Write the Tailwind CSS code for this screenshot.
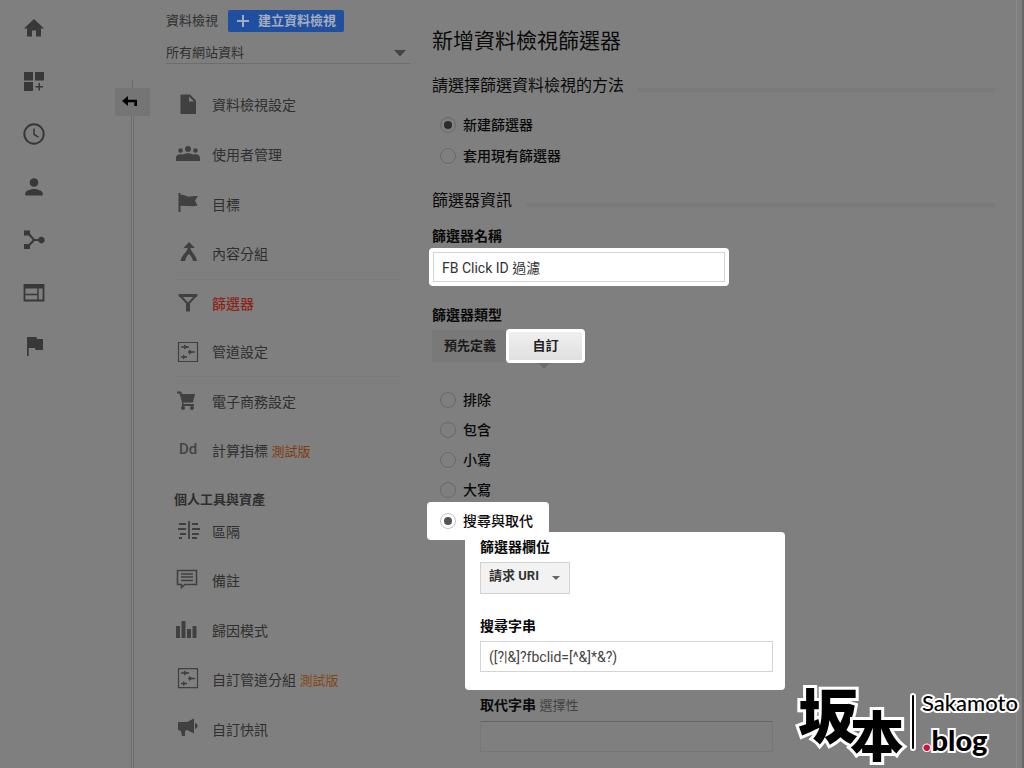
<!DOCTYPE html>
<html lang="zh-Hant">
<head>
<meta charset="utf-8">
<meta name="viewport" content="width=device-width, initial-scale=1">
<title>新增資料檢視篩選器</title>
<script src="https://cdn.jsdelivr.net/npm/@tailwindcss/browser@4"></script>
</head>
<body class="relative flex h-screen overflow-hidden bg-[#7f7f7f] font-[Roboto,'Noto_Sans_CJK_TC',sans-serif] text-sm text-[#0a0a0a]">

<nav aria-label="主選單" class="flex w-[68px] shrink-0 flex-col items-center gap-[29px] pt-4 text-[#383838]">
  <a href="#" aria-label="首頁"><svg class="size-6" viewBox="0 0 24 24" fill="currentColor"><path d="M10 20.500v-6h4v6h5v-8h3L12 3 2 12.500h3v8z"/></svg></a>
  <a href="#" aria-label="自訂"><svg class="size-6" viewBox="0 0 24 24" fill="currentColor"><path d="M2 3h9v8.500H2zM13 3h9v8.500h-9zM2 13h9v9H2zM16.500 14h1.500v3h3v1.500h-3v3h-1.500v-3h-3V17h3z"/></svg></a>
  <a href="#" aria-label="即時"><svg class="size-6" viewBox="0 0 24 24" fill="none" stroke="currentColor" stroke-width="2"><circle cx="12" cy="12" r="9.700"/><path d="M12 6.500v6l4.500 2.700" stroke-width="1.500"/></svg></a>
  <a href="#" aria-label="目標對象"><svg class="size-6" viewBox="0 0 24 24" fill="currentColor"><circle cx="12" cy="7.500" r="4.300"/><path d="M3.300 20.500v-2c0-3 5.800-4.500 8.700-4.500s8.700 1.500 8.700 4.500v2z"/></svg></a>
  <a href="#" aria-label="客戶開發"><svg class="size-6" viewBox="0 0 24 24" fill="currentColor"><path d="M2 2.500h6v3.200l4.600 5.300h3.700a3.300 3.300 0 1 1 0 2h-3.700L8 17.800V21H2v-5h4.700l4-4-4-4.500H2z"/></svg></a>
  <a href="#" aria-label="行為"><svg class="size-6" viewBox="0 0 24 24" fill="none" stroke="currentColor"><path d="M2.500 4h19v15.500h-19z" stroke-width="1.800"/><path d="M2 5.500h20" stroke-width="4"/><path d="M3 13.500h13M16 7v12" stroke-width="1.400"/></svg></a>
  <a href="#" aria-label="轉換"><svg class="size-6" viewBox="0 0 24 24" fill="currentColor"><path d="M5 3h9.500l.5 2h6v11h-7.500l-.5-2H6.700v8H5z"/></svg></a>
</nav>

<div class="flex w-[98px] shrink-0 flex-col items-center pt-20 pl-[30px]">
  <div class="h-2 w-px bg-[#6a6a6a]"></div>
  <button aria-label="返回" class="flex h-7 w-[35px] items-center justify-center bg-[#757575] pr-1 text-black"><svg class="size-4" viewBox="0 0 16 16" fill="currentColor"><path d="M0 7l6-5v3.700h9V12h-2.700V8.300H6V12z"/></svg></button>
  <div class="w-[3px] flex-1 border-x border-[#6d6d6d] bg-[#868686]"></div>
</div>

<aside class="flex w-[244px] shrink-0 flex-col text-[#2f2f2f]">
  <div class="flex items-center gap-2.5 pt-2.5 text-[13px] leading-[22px]">
    <span>資料檢視</span>
    <button class="flex h-[22px] items-center gap-2 rounded-xs bg-[#214f9f] px-2 font-bold text-[#a3acbd]">
      <svg class="size-3.5" viewBox="0 0 14 14" stroke="currentColor" stroke-width="2"><path d="M7 1v12M1 7h12"/></svg>建立資料檢視
    </button>
  </div>
  <button class="mt-2 flex h-[27px] items-center justify-between border-b border-[#6d6d6d] pt-1 text-[13px]">
    <span>所有網站資料</span>
    <svg class="mr-1 h-2 w-3 text-[#444]" viewBox="0 0 12 8" fill="currentColor"><path d="M0 1h12L6 7.500z"/></svg>
  </button>

  <ul class="mt-4 pr-2.5 pl-2.5">
    <li class="h-[50px]"><a href="#" class="flex h-full items-center gap-3"><svg class="size-6 text-[#404040]" viewBox="0 0 24 24" fill="currentColor"><path d="M4.500 1.500h9.500l6 6V21H4.500z"/><path d="M13 3.500v5h5z" fill="#7f7f7f"/></svg>資料檢視設定</a></li>
    <li class="h-[50px]"><a href="#" class="flex h-full items-center gap-3"><svg class="size-6 text-[#404040]" viewBox="0 0 24 24" fill="currentColor"><circle cx="12" cy="6" r="3"/><circle cx="4.500" cy="7.500" r="2.300"/><circle cx="19.500" cy="7.500" r="2.300"/><path d="M0 18v-3c0-4 5-4 7-3.300 2-2 8-2 10 0 2-.7 7-.7 7 3.300v3z"/></svg>使用者管理</a></li>
    <li class="h-[50px]"><a href="#" class="flex h-full items-center gap-3"><svg class="size-6 text-[#404040]" viewBox="0 0 24 24" fill="currentColor"><path d="M2.500 0h2v2c4-1 6 2.500 9.500 1.500 3-1 5-.5 8-.5l-3 4.500 2.500 5c-4 1.500-6 0-9 .5-3 .5-5-1-8 0v6h-2z"/></svg>目標</a></li>
    <li class="h-[49px]"><a href="#" class="flex h-full items-center gap-3"><svg class="size-6 text-[#404040]" viewBox="0 0 24 24" fill="currentColor"><path d="M13 0l6 6h-4.500c0 3 5 6 6.500 13h-4c-.5-3-2-5-4-7-2.500 2-3 4-4 7H4.500C6 12 11.500 10 11.500 6H7.500z"/></svg>內容分組</a></li>
    <li class="h-[49px] border-t border-[#797979]"><a href="#" aria-current="page" class="flex h-full items-center gap-3 font-medium text-[#8b2619]"><svg class="size-6 text-[#404040]" viewBox="0 0 24 24" fill="none" stroke="currentColor"><path d="M4 3.500h16L13 11v7.500h-2V11z" stroke-width="2"/><path d="M3 3.500h18" stroke-width="3"/></svg>篩選器</a></li>
    <li class="h-[49px] border-b border-[#797979]"><a href="#" class="flex h-full items-center gap-3"><svg class="size-6 text-[#404040]" viewBox="0 0 24 24" fill="none" stroke="currentColor" stroke-width="1.200"><path d="M2.500 2.500h19v19h-19z"/><path d="M5 7h8M12 12h7M5 17h6" stroke-width="1.500"/><path d="M8 4.500l4 2.500-4 2.500zM13 9.500l4 2.500-4 2.500zM7 14.500l3 2.500-3 2.500z" fill="currentColor" stroke="none"/></svg>管道設定</a></li>
    <li class="h-[50px]"><a href="#" class="flex h-full items-center gap-3"><svg class="size-6 text-[#404040]" viewBox="0 0 24 24" fill="currentColor"><path d="M1 1.500h4l1 2.500h13l-2 8.500H7.500v1.500H18v2H6V12L3.500 3.500H1z"/><circle cx="7" cy="18" r="2"/><circle cx="16" cy="18" r="2"/></svg>電子商務設定</a></li>
    <li class="h-[50px]"><a href="#" class="flex h-full items-center gap-3"><span class="w-6 pb-1 text-center text-[15px] font-medium text-[#444]">Dd</span><span>計算指標 <span class="text-[13px] text-[#82390f]">測試版</span></span></a></li>
  </ul>
  <h2 class="h-[30px] pt-3 pl-2 text-[13px] leading-[22px] font-bold">個人工具與資產</h2>
  <ul class="pl-2.5">
    <li class="h-[50px]"><a href="#" class="flex h-full items-center gap-3"><svg class="size-6 text-[#404040]" viewBox="0 0 24 24" fill="none" stroke="currentColor" stroke-width="1.800"><path d="M13 1v18M3 4h7M2 9h8M4 14h6M3 18h3M16 4h6M16 9h8M16 14h7M16 18h5"/></svg>區隔</a></li>
    <li class="h-[49px]"><a href="#" class="flex h-full items-center gap-3"><svg class="size-6 text-[#404040]" viewBox="0 0 24 24" fill="none" stroke="currentColor" stroke-width="1.600"><path d="M1.500 1.500h19v14H9l-3.500 3v-3h-4zM5 5h12M5 8h12M5 11.500h12"/></svg>備註</a></li>
    <li class="h-[50px]"><a href="#" class="flex h-full items-center gap-3"><svg class="size-6 text-[#404040]" viewBox="0 0 24 24" fill="currentColor"><path d="M0 7h4v12H0zM5.500 2h4v17h-4zM11 10h4v9h-4zM16.500 7h4v12h-4z"/></svg>歸因模式</a></li>
    <li class="h-[49px]"><a href="#" class="flex h-full items-center gap-3"><svg class="size-6 text-[#404040]" viewBox="0 0 24 24" fill="none" stroke="currentColor" stroke-width="1.200"><path d="M2.500 .600h19v19h-19z"/><path d="M5 5h8M12 10.500h7M5 15.500h6" stroke-width="1.500"/><path d="M8 2.500l4 2.500-4 2.500zM13 8l4 2.500-4 2.500zM7 13l3 2.500-3 2.500z" fill="currentColor" stroke="none"/></svg><span>自訂管道分組 <span class="text-[13px] text-[#864610]">測試版</span></span></a></li>
    <li class="h-[50px]"><a href="#" class="flex h-full items-center gap-3"><svg class="size-6 text-[#404040]" viewBox="0 0 24 24" fill="currentColor"><path d="M2 4h9l7-3.500v15L11 12l-2 1v5H6l-1-5-3-1zM19 5c3.500 1 3.500 5 0 6z"/></svg>自訂快訊</a></li>
    <li class="h-[50px]"><a href="#" aria-label="已排定的電子郵件" class="flex h-full items-center"><svg class="size-6 text-[#404040]" viewBox="0 0 24 24" fill="none" stroke="currentColor" stroke-width="2"><path d="M4 1h6v8H4zM13 1h6v8h-6z"/></svg></a></li>
  </ul>
</aside>

<main class="min-w-0 flex-1 pt-[26px] pr-[29px] pl-[22px]">
  <h1 class="text-[21px] leading-[30px]">新增資料檢視篩選器</h1>
  <form>
    <div class="mt-[18px] flex items-center gap-3.5">
      <h2 class="text-base">請選擇篩選資料檢視的方法</h2>
      <div class="mt-2 h-1 flex-1 bg-[#7a7a7a]"></div>
    </div>
    <div class="mt-[17px] flex flex-col gap-[11px] pl-2 font-medium">
      <label class="flex h-5 items-center gap-[7px]"><input type="radio" name="method" checked class="grid size-4 appearance-none place-content-center rounded-full border border-[#6a6a6a] checked:before:size-2 checked:before:rounded-full checked:before:bg-[#2b2b2b] checked:before:content-['']">新建篩選器</label>
      <label class="flex h-5 items-center gap-[7px]"><input type="radio" name="method" class="size-4 appearance-none rounded-full border border-[#6a6a6a]">套用現有篩選器</label>
    </div>

    <div class="mt-[23px] flex items-center gap-3.5">
      <h2 class="text-base">篩選器資訊</h2>
      <div class="mt-2 h-1 flex-1 bg-[#7a7a7a]"></div>
    </div>
    <label for="filter-name" class="mt-[13px] block leading-5 font-bold">篩選器名稱</label>
    <div class="mt-0.5 -ml-[3px] w-[300px] rounded-sm bg-white p-1">
      <input id="filter-name" type="text" value="FB Click ID 過濾" class="h-[30px] w-full border border-[#d4d4d4] px-2 text-[#333]">
    </div>

    <div class="mt-[19px] leading-5 font-bold">篩選器類型</div>
    <div class="mt-1 flex items-center text-[13px] font-bold">
      <button type="button" class="h-8 w-[74px] bg-[#797979] pl-0.5 text-[#1b1b1b]">預先定義</button>
      <div class="relative rounded-sm bg-white p-[3px]">
        <button type="button" class="h-7 w-[73px] bg-linear-to-b from-[#efefef] to-[#e0e0e0] text-[#222]">自訂</button>
        <svg class="absolute top-full left-8 h-1.5 w-3" viewBox="0 0 12 6" fill="#6c6c6c"><path d="M0 0h12L6 6z"/></svg>
      </div>
    </div>

    <div class="mt-[27px] flex flex-col gap-2.5 pl-2 font-medium">
      <label class="flex h-5 items-center gap-[7px]"><input type="radio" name="kind" class="size-4 appearance-none rounded-full border border-[#6a6a6a]">排除</label>
      <label class="flex h-5 items-center gap-[7px]"><input type="radio" name="kind" class="size-4 appearance-none rounded-full border border-[#6a6a6a]">包含</label>
      <label class="flex h-5 items-center gap-[7px]"><input type="radio" name="kind" class="size-4 appearance-none rounded-full border border-[#6a6a6a]">小寫</label>
      <label class="flex h-5 items-center gap-[7px]"><input type="radio" name="kind" class="size-4 appearance-none rounded-full border border-[#6a6a6a]">大寫</label>
    </div>
    <label class="mt-0.5 -ml-[5px] flex h-[38px] w-[122px] items-center gap-[7px] rounded-sm bg-white pl-[13px] font-medium"><input type="radio" name="kind" checked class="grid size-4 appearance-none place-content-center rounded-full border border-[#c4c4c4] checked:before:size-2 checked:before:rounded-full checked:before:bg-[#555] checked:before:content-['']">搜尋與取代</label>
    <div class="-mt-2 ml-[33px] w-[320px] rounded-sm rounded-tl-none bg-white pt-[5px] pr-3 pb-[18px] pl-[15px]">
      <label for="field" class="block w-fit leading-5 font-bold">篩選器欄位</label>
      <div class="relative mt-[5px] w-[90px]">
        <select id="field" class="h-8 w-full appearance-none border border-[#d2d2d2] bg-[#f2f2f2] pb-1 pl-2 text-[13px] font-bold text-[#333]"><option>請求 URI</option></select>
        <svg class="pointer-events-none absolute top-3.5 right-2.5 h-1 w-2" viewBox="0 0 8 4" fill="#666"><path d="M0 0h8L4 4z"/></svg>
      </div>
      <label for="search" class="mt-[22px] block leading-5 font-bold">搜尋字串</label>
      <input id="search" type="text" value="([?|&amp;]?fbclid=[^&amp;]*&amp;?)" class="mt-[5px] block h-[31px] w-full border border-[#d4d4d4] px-2 text-[#444]">
    </div>
    <div class="mt-[5px] ml-12 w-[293px]">
      <label for="replace" class="block leading-5 font-bold">取代字串 <span class="text-[13px] font-normal text-[#434343]">選擇性</span></label>
      <input id="replace" type="text" class="mt-[5px] block h-[31px] w-full border border-[#777] border-t-[#676767]">
    </div>
  </form>
</main>

<div class="absolute inset-y-0 right-0 w-2 border-r-2 border-l border-r-[#666] border-l-[#8a8a8a]"></div>

<div class="absolute right-1.5 bottom-1 flex h-[84px] items-center text-black [paint-order:stroke_fill] [-webkit-text-stroke:6px_white]">
  <div class="flex font-['Noto_Sans_CJK_TC',sans-serif] leading-none font-black">
    <span class="text-[60px]">坂</span><span class="-ml-2 pt-6 text-[54px]">本</span>
  </div>
  <div class="mr-1.5 ml-1.5 h-[58px] w-1.5 rounded-full border-2 border-white bg-black"></div>
  <div class="flex flex-col">
    <span class="font-[Lato,sans-serif] text-[22px] leading-[27px] font-medium [-webkit-text-stroke:4px_white]">Sakamoto</span>
    <span class="font-[Lato,sans-serif] text-[29px] leading-[28px] font-black [-webkit-text-stroke:4px_white]"><span class="text-[40px] leading-none text-[#d01235] [-webkit-text-stroke:2px_white]">.</span>blog</span>
  </div>
</div>
</body>
</html>
